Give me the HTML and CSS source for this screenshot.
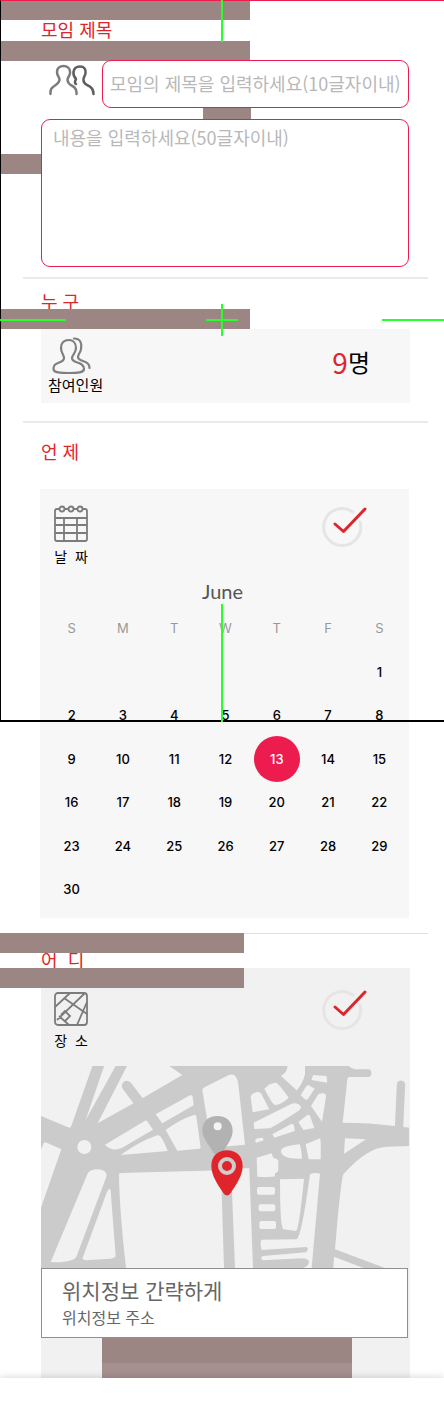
FILE: index.html
```html
<!DOCTYPE html>
<html lang="ko">
<head>
<meta charset="utf-8">
<meta name="viewport" content="width=device-width, initial-scale=1">
<title>모임 만들기</title>
<link rel="stylesheet" href="styles.css">
</head>
<body>
<main class="page">
  <section class="section section--title">
    <span class="bar bar--top"></span>
    <span class="bar bar--under-title"></span>
    <span class="bar bar--between"></span>
    <span class="bar bar--side"></span>
    <h2 class="heading"><label for="title">모임 제목</label></h2>
    <div class="title-row">
      <svg class="icon-pair" width="48" height="32" viewBox="0 0 48 32" fill="none" stroke-width="2.500" stroke-linecap="round" stroke-linejoin="round">
        <path stroke="#5e5e5e" d="M27 20Q25 19 27 15Q24 12 24.500 8C25 4 28 2.500 31 2.500C35 2.500 37 5 36.500 9C36.500 12 34 13 34.500 16C34.500 19 36 20 38 21Q44.500 23.500 44.500 30"/>
        <path stroke="#7c7c7c" d="M1.500 30Q1 25 4 23C7 21 10.500 19 10.500 15.500C10.500 13 8 12 8 8C8 4 11 2 14.500 2C18 2 21.500 4 21 9C21 12 18.500 13 18.500 16C19 21 23 21 25.500 23.500Q28 26 27.500 30"/>
      </svg>
      <input class="field" id="title" type="text" maxlength="10" placeholder="모임의 제목을 입력하세요(10글자이내)">
    </div>
    <textarea class="field field--body" aria-label="내용" maxlength="50" placeholder="내용을 입력하세요(50글자이내)"></textarea>
  </section>

  <section class="section section--who">
    <hr class="divider">
    <h2 class="heading">누 구</h2>
    <span class="bar bar--who"></span>
    <div class="panel panel--who">
      <div class="people">
        <svg class="people-icon" width="40" height="38" viewBox="0 0 40 38" fill="none" stroke="#7f7f7f" stroke-width="2.200" stroke-linecap="round">
          <path d="M17 3C12 3 9 6 9 11C9 16 12 18 12 21C12 27 1 24 1.500 32C1.500 36 9 36 17 36C25 36 32 36 32 32C32 24 20 27 20 21C20 18 24 16 24 11C24 6 21 3 17 3Z"/>
          <path d="M22 1.500C29 1.500 30 7 29 12C29 15 26 17 26 20C26 25 38 23 37.500 31"/>
        </svg>
        <span class="caption caption--wide">참여인원</span>
      </div>
      <p class="count"><span class="count-number">9</span>명</p>
    </div>
  </section>

  <section class="section section--when">
    <hr class="divider">
    <h2 class="heading">언 제</h2>
    <div class="panel panel--when">
      <div class="panel-head">
        <div class="kind">
          <svg width="34" height="37" viewBox="0 0 34 37" fill="none" stroke="#7c7c7c" stroke-width="1.800">
            <path d="M5 4H3Q1 4 1 6V34Q1 36 3 36H31Q33 36 33 34V6Q33 4 31 4H29M11 4H14M20 4H23M1 13H33M1 20H33M1 28H33M10 13V36M23 13V36"/>
            <circle cx="8" cy="4" r="2.500"/><circle cx="17" cy="4" r="2.500"/><circle cx="26" cy="4" r="2.500"/>
          </svg>
          <span class="caption">날&nbsp; 짜</span>
        </div>
        <svg class="check" width="46" height="42" viewBox="0 0 46 42" fill="none" stroke-width="3" stroke-linecap="round">
          <path stroke="#e5e5e5" d="M31 7A18.500 18.500 0 1 0 38 17"/>
          <path stroke="#df252b" stroke-linejoin="round" d="M13 19L21.500 26.500L43 4"/>
        </svg>
      </div>
      <h3 class="month">June</h3>
      <table class="calendar">
        <thead>
          <tr><th scope="col">S</th><th scope="col">M</th><th scope="col">T</th><th scope="col">W</th><th scope="col">T</th><th scope="col">F</th><th scope="col">S</th></tr>
        </thead>
        <tbody>
          <tr><td></td><td></td><td></td><td></td><td></td><td></td><td><button class="day">1</button></td></tr>
          <tr><td><button class="day">2</button></td><td><button class="day">3</button></td><td><button class="day">4</button></td><td><button class="day">5</button></td><td><button class="day">6</button></td><td><button class="day">7</button></td><td><button class="day">8</button></td></tr>
          <tr><td><button class="day">9</button></td><td><button class="day">10</button></td><td><button class="day">11</button></td><td><button class="day">12</button></td><td><button class="day day--selected" aria-pressed="true">13</button></td><td><button class="day">14</button></td><td><button class="day">15</button></td></tr>
          <tr><td><button class="day">16</button></td><td><button class="day">17</button></td><td><button class="day">18</button></td><td><button class="day">19</button></td><td><button class="day">20</button></td><td><button class="day">21</button></td><td><button class="day">22</button></td></tr>
          <tr><td><button class="day">23</button></td><td><button class="day">24</button></td><td><button class="day">25</button></td><td><button class="day">26</button></td><td><button class="day">27</button></td><td><button class="day">28</button></td><td><button class="day">29</button></td></tr>
          <tr><td><button class="day">30</button></td><td></td><td></td><td></td><td></td><td></td><td></td></tr>
        </tbody>
      </table>
    </div>
  </section>

  <section class="section section--where">
    <hr class="divider divider--thin">
    <h2 class="heading">어&nbsp; 디</h2>
    <div class="panel panel--where">
      <div class="panel-head panel-head--where">
        <div class="kind">
          <svg width="34" height="38" viewBox="0 -4 34 38" fill="none" stroke="#7c7c7c" stroke-width="1.800">
            <rect x="1" y="1" width="32" height="32" rx="3"/>
            <path d="M1 15L16 1M10 6L33 22M3 28L31 1M33 10L23 33M5 24L15 33M7 23L11 19L16 24L11 29"/>
          </svg>
          <span class="caption">장&nbsp; 소</span>
        </div>
        <svg class="check" width="46" height="42" viewBox="0 0 46 42" fill="none" stroke-width="3" stroke-linecap="round">
          <path stroke="#e5e5e5" d="M31 7A18.500 18.500 0 1 0 38 17"/>
          <path stroke="#df252b" stroke-linejoin="round" d="M13 19L21.500 26.500L43 4"/>
        </svg>
      </div>
      <svg class="map" viewBox="33 20 1107 606" role="img" aria-label="지도">
        <rect x="33" y="20" width="1104" height="606" fill="#cbcbcb"/>
        <g fill="#f1f1f1">
          <path d="M33 18H188L124 200Q121 208 114 204L33 170Z"/>
          <path d="M223 18H258L167 182Z"/>
          <path d="M292 18H415L457 47L340 115L203 192Z"/>
          <path d="M517 92Q516 87 525 83L595 48Q620 38 625 75L645 256L545 265Z"/>
          <path d="M377 165L480 108Q487 106 488 112L491 138L397 192Z"/>
          <path d="M407 212Q450 180 492 167Q498 165 499 172L512 265Q510 269 500 269L442 274Z"/>
          <path d="M225 256L345 184Q350 183 353 187L369 211L275 266Q245 278 225 256Z"/>
          <path d="M272 287Q330 245 382 228Q388 226 392 232Q402 245 413 275Z"/>
          <circle cx="163" cy="263" r="21"/>
          <path d="M33 270L41 252Q44 247 50 250L94 270L33 445Z"/>
          <path d="M62 608L172 345Q178 330 205 330Q232 333 230 350L140 590Q134 608 75 609Z"/>
          <path d="M157 598L230 400Q240 380 242 395L257 590Q256 597 240 598L165 603Z"/>
          <path d="M267 345Q268 341 275 341L573 333L582 626H288Q268 450 267 345Z"/>
          <g transform="translate(570 0)">
            <path d="M20 327H88L99 626H45L36 400Z"/>
            <path d="M203 18H255V45Q248 75 230 93L183 50Q202 40 203 18Z"/>
            <path d="M275 58L280 47L318 50Q322 52 321 70L275 62Z"/>
            <path d="M258 82Q264 75 270 80L284 88L263 120Q258 123 255 120L242 108Z"/>
            <path d="M92 112Q95 102 112 98Q120 97 124 103L148 150L98 159Z"/>
            <path d="M133 88Q150 70 168 70Q176 72 206 115Q185 135 165 137Q157 135 133 88Z"/>
            <path d="M101 190L215 133Q235 128 243 143Q243 150 235 155Q165 200 150 207L103 209Z"/>
            <path d="M273 140L295 105Q318 96 318 112L306 187Z"/>
            <path d="M235 188L262 167Q267 165 270 170L283 206L250 212Z"/>
            <path d="M157 225L215 193L222 197L224 215L163 235Z"/>
            <path d="M105 242Q110 235 128 235L131 243L108 250Z"/>
            <path d="M183 272Q190 260 238 255Q243 257 246 298Q180 300 183 272Z"/>
            <path d="M257 255L300 237Q303 237 302 300L266 300Z"/>
            <path d="M110 295L155 282L160 296Q172 297 175 305V333Q173 340 165 342V350Q160 354 112 352Z"/>
            <rect x="111" y="383" width="54" height="23" rx="6"/>
            <rect x="116" y="435" width="50" height="21" rx="6"/>
            <rect x="118" y="485" width="50" height="24" rx="6"/>
            <path d="M180 360L252 358Q237 510 228 515L190 510Q180 505 180 360Z"/>
            <path d="M270 345Q285 338 300 343L275 626H250Q268 620 267 605Q262 598 245 597L128 603Q118 592 130 590L258 579Q268 570 260 563L125 572Q118 545 125 541L230 540Q245 530 270 345Z"/>
            <path d="M387 18H570V205L525 200Q450 190 368 190L382 60L385 53H445Q454 53 454 42Q454 30 445 30H405Q395 30 387 20Z"/>
            <path d="M375 237L438 240L372 283Z"/>
            <path d="M570 260L500 262Q440 265 370 345Q362 365 345 570L495 626H570Z"/>
            <path d="M342 592L430 626H340Z"/>
          </g>
        </g>
        <path d="M291 80L330 132" stroke="#cbcbcb" stroke-width="31" stroke-linecap="round"/>
        <path d="M1113 76L1107 206" stroke="#cbcbcb" stroke-width="25" stroke-linecap="round"/>
        <path fill="#b2b2b2" d="M562 170C534 170 517 188 517 214C517 238 540 258 552 284H576C586 262 608 240 608 214C608 188 590 170 562 170Z"/>
        <circle cx="563" cy="201" r="12" fill="#f4f4f4"/>
        <path fill="#df252b" d="M591 273C562 273 544 292 544 320C544 350 565 378 580 401Q591 416 602 401C617 378 638 350 638 320C638 292 620 273 591 273Z"/>
        <circle cx="591" cy="320" r="21" fill="#df252b" stroke="#cfcccc" stroke-width="12"/>
      </svg>
      <div class="address">
        <p class="address-name">위치정보 간략하게</p>
        <p class="address-detail">위치정보 주소</p>
      </div>
      <div class="bottom-bar"></div>
    </div>
    <span class="bar bar--where"></span>
    <span class="bar bar--where-low"></span>
  </section>
  <footer class="footer"></footer>

  <div class="guides" aria-hidden="true">
    <span class="frame"></span>
    <span class="guide guide--v guide--top"></span>
    <span class="guide guide--v guide--center"></span>
    <span class="guide guide--v guide--bottom"></span>
    <span class="guide guide--h guide--left"></span>
    <span class="guide guide--h guide--middle"></span>
    <span class="guide guide--h guide--right"></span>
  </div>
</main>
</body>
</html>
```
FILE: styles.css
```css
* { box-sizing: border-box; }

body {
  margin: 0;
  background: #fff;
  color: #111;
  font-family: "Noto Sans CJK KR", sans-serif;
}

h2, h3, p { margin: 0; }
svg { display: block; }

.page { position: relative; overflow: hidden; }
.section { position: relative; }

.heading {
  padding-left: 41px;
  color: #df252b;
  font-size: 18px;
  font-weight: 400;
  line-height: 18px;
}

.divider {
  height: 2px;
  margin: 0 16px 0 23px;
  border: 0;
  background: #ebebeb;
}
.divider--thin { height: 1px; background: #e0e0e0; }

.panel { margin: 0 34px 0 41px; background: #f7f7f7; }

/* Title and description */
.section--title { padding: 20px 35px 10px 41px; }
.section--title .heading { padding-left: 0; }
.title-row {
  display: grid;
  grid-template-columns: 61px 1fr;
  align-items: start;
  margin: 22px 0 11px;
}
.icon-pair { margin: 4px 0 0 8px; }
.field {
  position: relative;
  z-index: 1;
  display: block;
  width: 100%;
  height: 48px;
  padding: 0 7px 2px;
  border: 1px solid #ed1c4e;
  border-radius: 9px;
  outline: 0;
  background: #fff;
  color: #333;
  font-family: inherit;
  font-size: 18px;
  font-weight: 400;
}
.field::placeholder { color: #b8b8b8; opacity: 1; }
.field--body {
  height: 148px;
  padding: 5px 11px;
  line-height: 24px;
  resize: none;
}

/* Participants */
.section--who .heading { margin: 13px 0 19px; }
.panel--who {
  display: flex;
  align-items: center;
  justify-content: space-between;
  height: 74px;
  padding: 0 40px 0 7px;
}
.people-icon { margin-left: 4px; }
.caption {
  display: block;
  color: #000;
  font-size: 14px;
  line-height: 20px;
  white-space: nowrap;
}
.caption--wide { font-size: 15px; }
.count {
  display: flex;
  align-items: center;
  padding-bottom: 8px;
  color: #000;
  font-size: 24px;
  line-height: 28px;
}
.count-number { color: #df252b; font-size: 28px; }

/* Date */
.section--when { padding: 18px 0 15px; }
.section--when .heading { margin: 19px 0 29px; }
.panel-head {
  display: flex;
  align-items: flex-start;
  justify-content: space-between;
  padding: 16px 41px 15px 14px;
}
.kind {
  display: flex;
  flex-direction: column;
  align-items: center;
  gap: 4px;
}
.month {
  color: #555;
  font-family: Lato, sans-serif;
  font-size: 20px;
  font-weight: 400;
  line-height: 20px;
  text-align: center;
  padding-right: 4px;
}
.calendar {
  width: calc(100% - 10px);
  margin: 5px 4px 0 6px;
  border-collapse: collapse;
  table-layout: fixed;
  font-family: Inter, sans-serif;
  text-align: center;
}
.calendar th {
  height: 44px;
  padding: 0;
  color: #999;
  font-size: 13px;
  font-weight: 400;
}
.calendar td { height: 43px; padding: 0; }
.calendar tr:nth-child(even) td { height: 44px; }
.panel--when { margin: 0 35px 0 40px; padding-bottom: 7px; }
.day {
  display: block;
  width: 46px;
  height: 46px;
  margin: -2px auto;
  padding: 0;
  border: 0;
  border-radius: 50%;
  background: none;
  color: #000;
  font: 500 13px/20px Inter, sans-serif;
}
.day--selected { background: #ed1c4e; color: #fff; }

/* Place */
.section--where .heading { margin-top: 16px; }
.panel--where { background: #f1f1f1; }
.panel-head--where { padding: 20px 42px 16px 13px; }
.map { width: 100%; }
.address {
  margin-right: 2px;
  padding: 7px 20px;
  border: 1px solid #8f8f8f;
  background: #fff;
  color: #666;
}
.address-name { font-size: 21px; line-height: 28px; }
.address-detail { font-size: 16px; line-height: 26px; }
.bottom-bar {
  width: 250px;
  height: 40px;
  margin-left: 61px;
  background: linear-gradient(#9c8684 62%, #a5908f 62%);
}
.footer {
  position: relative;
  height: 48px;
  background: #fff;
  box-shadow: 0 -1px 7px rgba(0, 0, 0, 0.15);
}

/* Bars lying across the sections */
.bar {
  position: absolute;
  left: 0;
  width: 250px;
  height: 20px;
  background: #9c8684;
}
.bar--top { top: 0; }
.bar--under-title { top: 41px; }
.bar--between { top: 100px; left: 203px; width: 48px; }
.bar--side { top: 154px; }
.bar--who { top: 32px; }
.bar--where { top: 0; width: 244px; }
.bar--where-low { top: 35px; width: 244px; }

/* Alignment guides */
.guides {
  position: absolute;
  inset: 0;
  z-index: 2;
  pointer-events: none;
}
.frame {
  position: absolute;
  top: 0;
  left: 0;
  right: 0;
  height: 722px;
  border-top: 1px solid #ed1c4e;
  border-left: 1px solid #000;
  border-bottom: 2px solid #000;
}
.guide { position: absolute; background: #2bff2b; }
.guide--v { left: calc(50% - 1px); width: 2px; }
.guide--h { top: 319px; height: 2px; }
.guide--top { top: 0; height: 42px; }
.guide--center { top: 304px; height: 32px; }
.guide--bottom { top: 604px; height: 118px; }
.guide--left { left: 0; width: 66px; }
.guide--middle { left: calc(50% - 16px); width: 32px; }
.guide--right { right: 0; width: 62px; }
```
